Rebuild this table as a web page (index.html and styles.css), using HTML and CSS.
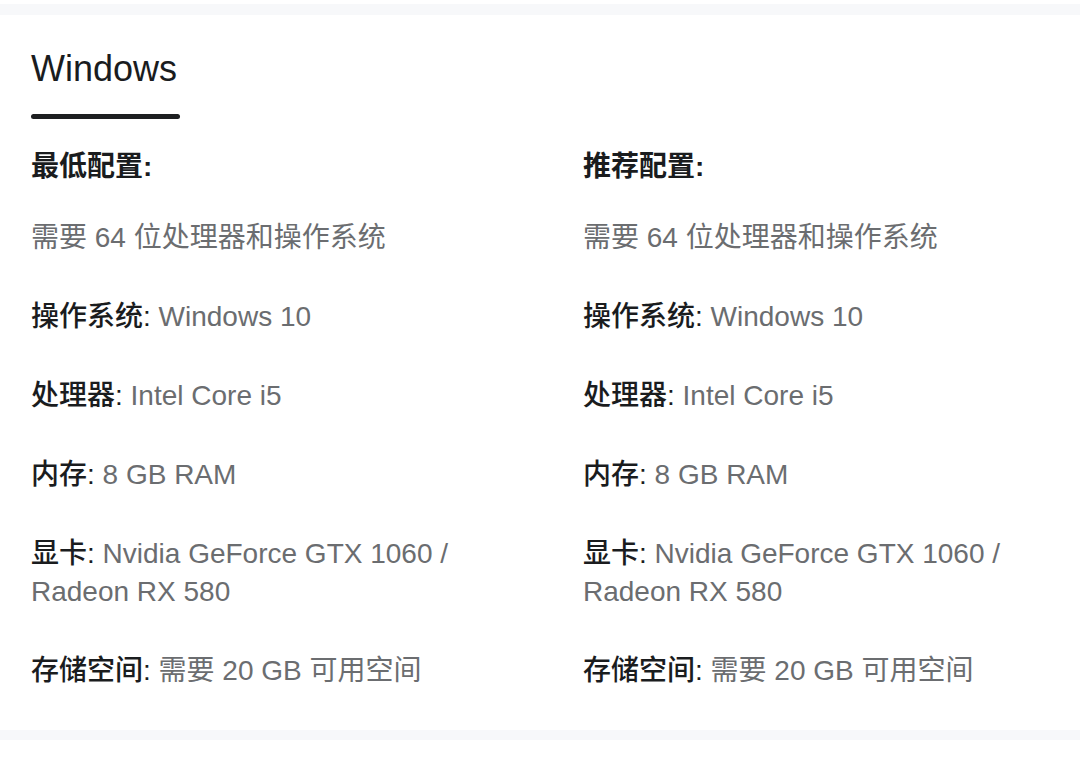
FILE: index.html
```html
<!DOCTYPE html>
<html lang="zh-CN">
<head>
<meta charset="utf-8">
<title>Windows 配置</title>
<link rel="stylesheet" href="styles.css">
</head>
<body>
<div class="band band-top"></div>
<section class="specs">
  <div class="tab">
    <h2 class="tab-title">Windows</h2>
    <div class="tab-bar"></div>
  </div>
  <div class="cols">
    <div class="col">
      <h3 class="col-title">最低配置:</h3>
      <p class="item">需要 64 位处理器和操作系统</p>
      <p class="item"><span class="label">操作系统:</span> Windows 10</p>
      <p class="item"><span class="label">处理器:</span> Intel Core i5</p>
      <p class="item"><span class="label">内存:</span> 8 GB RAM</p>
      <p class="item"><span class="label">显卡:</span> Nvidia GeForce GTX 1060 / Radeon RX 580</p>
      <p class="item"><span class="label">存储空间:</span> 需要 20 GB 可用空间</p>
    </div>
    <div class="col">
      <h3 class="col-title">推荐配置:</h3>
      <p class="item">需要 64 位处理器和操作系统</p>
      <p class="item"><span class="label">操作系统:</span> Windows 10</p>
      <p class="item"><span class="label">处理器:</span> Intel Core i5</p>
      <p class="item"><span class="label">内存:</span> 8 GB RAM</p>
      <p class="item"><span class="label">显卡:</span> Nvidia GeForce GTX 1060 / Radeon RX 580</p>
      <p class="item"><span class="label">存储空间:</span> 需要 20 GB 可用空间</p>
    </div>
  </div>
</section>
<div class="band band-bottom"></div>
</body>
</html>
```

FILE: styles.css
```css
html, body {
  margin: 0;
  padding: 0;
  background: #ffffff;
}
body {
  font-family: "Liberation Sans", "Noto Sans CJK SC", sans-serif;
  color: #1a1c1e;
}
.band {
  height: 11px;
  background: #f7f8fa;
}
.band-top {
  margin-top: 4px;
}
.band-bottom {
  height: 10px;
}
.specs {
  padding: 30px 31px 40px;
}
.tab {
  display: flex;
  flex-direction: column;
  align-items: flex-start;
}
.tab-title {
  margin: 0;
  font-size: 36px;
  line-height: 48px;
  font-weight: 400;
  color: #1a1c1e;
}
.tab-bar {
  width: 149px;
  height: 5px;
  border-radius: 3px;
  background: #1d1f21;
  margin-top: 21px;
}
.cols {
  display: grid;
  grid-template-columns: 1fr 1fr;
  column-gap: 86px;
  margin-top: 29px;
}
.col-title {
  margin: 0 0 33px;
  font-size: 28px;
  line-height: 38px;
  font-weight: 700;
  color: #1a1c1e;
}
.item {
  margin: 0 0 41px;
  font-size: 28px;
  line-height: 38px;
  color: #6b6d70;
}
.item:last-child {
  margin-bottom: 0;
}
.label {
  color: #1a1c1e;
  font-weight: 500;
}
```
